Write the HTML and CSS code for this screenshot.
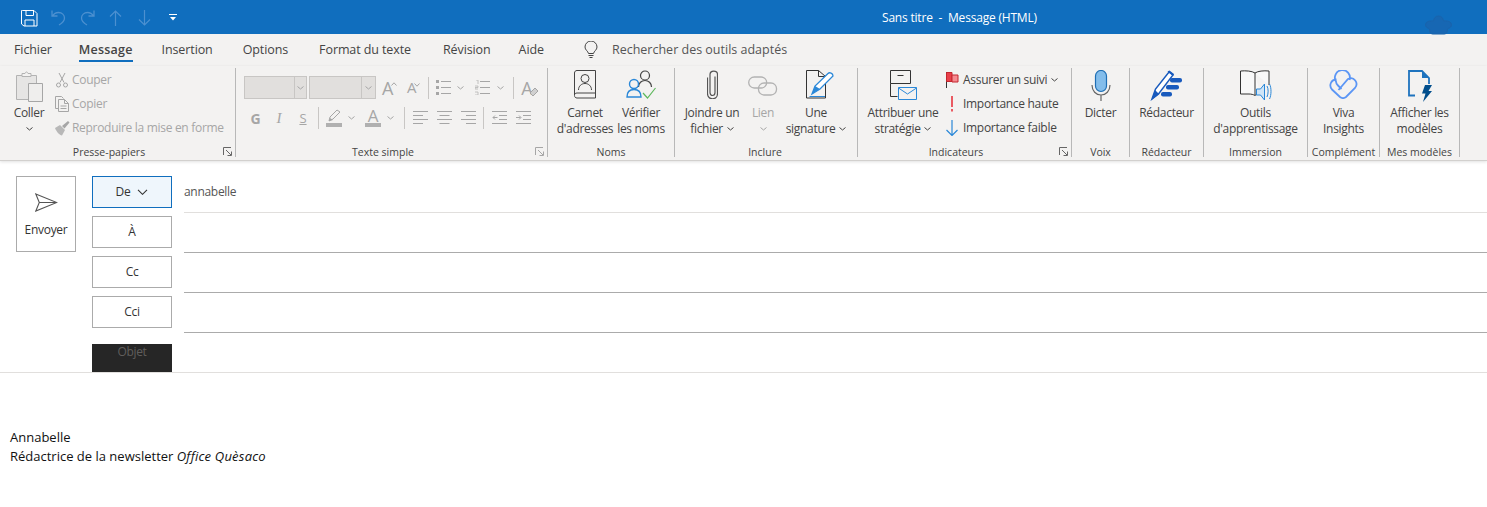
FILE: index.html
```html
<!DOCTYPE html>
<html lang="fr">
<head>
<meta charset="utf-8">
<title>Sans titre - Message (HTML)</title>
<link rel="stylesheet" href="styles.css">
</head>
<body>
<header class="titlebar">
  <div class="qat">
    <svg class="q-save" width="17" height="17" viewBox="0 0 17 17"><path d="M1.500.5h11.500l3 3v12.500H3L.5 14V.5z M5 .5v5h7.500v-5 M4 16v-6h9v6" fill="none" stroke="#fff"/></svg>
    <svg class="q-undo" width="15" height="16" viewBox="0 0 15 16"><path d="M1 .5v5.500h5.500M1.500 6C3 3.500 5 2.500 7.500 2.500c3.500 0 6 2.500 6 5.500 0 3-2 5-5.500 7" fill="none" stroke="#4c90d0" stroke-width="1.300"/></svg>
    <svg class="q-redo" width="15" height="16" viewBox="0 0 15 16"><path d="M14 .5v5.500H8.500M13.500 6C12 3.500 10 2.500 7.500 2.500c-3.500 0-6 2.500-6 5.500 0 3 2 5 5.500 7" fill="none" stroke="#4c90d0" stroke-width="1.300"/></svg>
    <svg class="q-up" width="13" height="16" viewBox="0 0 13 16"><path d="M6.500 16V1M1 6.500l5.500-5.500L12 6.500" fill="none" stroke="#4c90d0" stroke-width="1.200"/></svg>
    <svg class="q-down" width="13" height="16" viewBox="0 0 13 16"><path d="M6.500 0v15M1 9.500l5.500 5.500L12 9.500" fill="none" stroke="#4c90d0" stroke-width="1.200"/></svg>
    <svg class="q-more" width="8" height="7" viewBox="0 0 8 7"><path d="M0 .5h8" stroke="#fff"/><path d="M1 3h6L4 6.500z" fill="#fff"/></svg>
  </div>
  <div class="doc-title">Sans titre &nbsp;-&nbsp; Message (HTML)</div>
  <svg class="title-deco" width="27" height="20" viewBox="0 0 27 20"><path d="M13.500 1c3 0 4.500 2 5 5 4-.5 8 .5 8 4 0 2.500-2.500 3-4 4 0 3-1 5-3 5h-12c-2 0-3-2-3-5-1.500-1-4-1.500-4-4 0-3.500 4-4.500 8-4 .5-3 2-5 5-5z" fill="#1767b3" stroke="#1a64ac"/></svg>
</header>

<nav class="tabs">
  <span class="tab tab-first">Fichier</span>
  <span class="tab tab-active">Message</span>
  <span class="tab">Insertion</span>
  <span class="tab">Options</span>
  <span class="tab">Format du texte</span>
  <span class="tab">Révision</span>
  <span class="tab">Aide</span>
  <svg class="bulb" width="14" height="18" viewBox="0 0 14 18"><path d="M4.500 12.500C4 10 1 9 1 6a6 6 0 0 1 12 0c0 3-3 4-3.500 6.500z M4.500 14.500h5M5.500 16.500h3" fill="none" stroke="#444"/></svg>
  <span class="search">Rechercher des outils adaptés</span>
</nav>

<section class="ribbon">
  <div class="group g-clip">
    <div class="group-body">
      <div class="big coller">
        <svg class="big-icon" width="28" height="32" viewBox="0 0 28 32"><path d="M1.500 5.500h20v24h-20z" fill="#e6e5e4" stroke="#b3b3b3"/><path d="M7 5.500V3.500h3C10.500 1.500 12.500 1.500 13 3.500h3v3H7z" fill="#f3f2f1" stroke="#b3b3b3"/><path d="M13.500 13.500h14v18h-14z" fill="#efeeed" stroke="#a6a6a6"/></svg>
        <span class="big-label">Coller</span>
        <svg class="chev" width="7" height="4" viewBox="0 0 7 4"><path d="M.5.500l3 2.500 3-2.500" fill="none" stroke="#444"/></svg>
      </div>
      <div class="smalls">
        <div class="small off">
          <svg width="16" height="16" viewBox="0 0 16 16"><path d="M5 1l5 9.500M11 1L6 10.500" fill="none" stroke="#a6a6a6"/><circle cx="4.500" cy="13" r="2" fill="none" stroke="#a6a6a6"/><circle cx="11.500" cy="13" r="2" fill="none" stroke="#a6a6a6"/></svg>
          <span>Couper</span>
        </div>
        <div class="small off">
          <svg width="16" height="16" viewBox="0 0 16 16"><path d="M5.500 12.500h-4V.5h6l2 2" fill="none" stroke="#a6a6a6"/><path d="M4.500 3.500h6l4 4v8h-10z M10.500 3.500v4h4 M6.500 10h6M6.500 12.500h6" fill="#f3f2f1" stroke="#a6a6a6"/></svg>
          <span>Copier</span>
        </div>
        <div class="small off">
          <svg width="16" height="16" viewBox="0 0 16 16"><path d="M1 8l5-3 5 5-3 5.500C5 15 2 11 1 8z" fill="#b8b8b8"/><path d="M8 6l6-5 1.500 1.500-5 6" fill="#a6a6a6"/></svg>
          <span>Reproduire la mise en forme</span>
        </div>
      </div>
    </div>
    <div class="group-label label-clip">Presse-papiers</div>
    <svg class="launcher" width="9" height="9" viewBox="0 0 9 9"><path d="M.5 8V.5H8M3 3l5 5M4.500 8.500h4v-4" fill="none" stroke="#666"/></svg>
  </div>

  <div class="group g-text">
    <div class="group-body fmt">
      <div class="fmt-row row-top">
        <div class="combo c1"><span></span><svg width="7" height="4" viewBox="0 0 7 4"><path d="M.5.500l3 2.500 3-2.500" fill="none" stroke="#a6a6a6"/></svg></div>
        <div class="combo c2"><span></span><svg width="7" height="4" viewBox="0 0 7 4"><path d="M.5.500l3 2.500 3-2.500" fill="none" stroke="#a6a6a6"/></svg></div>
        <span class="glyph-a a-big m6">A<svg width="6" height="4" viewBox="0 0 6 4"><path d="M.5 3.500L3 .8l2.500 2.700" fill="none" stroke="#a6a6a6"/></svg></span>
        <span class="glyph-a a-small m10">A<svg width="6" height="4" viewBox="0 0 6 4"><path d="M.5.500L3 3.200 5.500.5" fill="none" stroke="#a6a6a6"/></svg></span>
        <i class="sep m8"></i>
        <svg class="m7" width="16" height="15" viewBox="0 0 16 15"><path d="M0 0h3v3H0zM0 6h3v3H0zM0 12h3v3H0z" fill="#a6a6a6"/><path d="M5 1.500h10M5 7.500h10M5 13.500h10" stroke="#a6a6a6"/></svg>
        <svg class="m5 mini" width="7" height="4" viewBox="0 0 7 4"><path d="M.5.500l3 2.500 3-2.500" fill="none" stroke="#a6a6a6"/></svg>
        <svg class="m11" width="16" height="15" viewBox="0 0 16 15"><path d="M1 0h2v4M0 6h3v1.500H0V9h3M0 12h3v3H0" fill="none" stroke="#b5b5b5" stroke-width=".8"/><path d="M5 1.500h10M5 7.500h10M5 13.500h10" stroke="#a6a6a6"/></svg>
        <svg class="m6 mini" width="7" height="4" viewBox="0 0 7 4"><path d="M.5.500l3 2.500 3-2.500" fill="none" stroke="#a6a6a6"/></svg>
        <i class="sep m9"></i>
        <span class="clear m7">A<svg width="10" height="10" viewBox="0 0 10 10"><path d="M1 6l5-5 3 3-5 5z" fill="#d0d0d0" stroke="#a6a6a6"/></svg></span>
      </div>
      <div class="fmt-row row-bottom">
        <span class="tool bold">G</span>
        <span class="tool ital">I</span>
        <span class="tool under">S</span>
        <i class="sep m3"></i>
        <svg class="m7" width="16" height="18" viewBox="0 0 16 18"><path d="M3 12l1-4 7-7 3 2-7 7z" fill="none" stroke="#a6a6a6"/><path d="M3 12l1-3 3 2z" fill="#a6a6a6"/><path d="M0 14h16v4H0z" fill="#b0b0b0"/></svg>
        <svg class="m6 mini" width="7" height="4" viewBox="0 0 7 4"><path d="M.5.500l3 2.500 3-2.500" fill="none" stroke="#a6a6a6"/></svg>
        <span class="color-a m10">A</span>
        <svg class="m6 mini" width="7" height="4" viewBox="0 0 7 4"><path d="M.5.500l3 2.500 3-2.500" fill="none" stroke="#a6a6a6"/></svg>
        <i class="sep m10"></i>
        <svg class="m8" width="15" height="14" viewBox="0 0 15 14"><path d="M0 .5h15M0 4.500h10M0 8.500h15M0 12.500h10" stroke="#a6a6a6"/></svg>
        <svg class="m9" width="15" height="14" viewBox="0 0 15 14"><path d="M0 .5h15M2.500 4.500h10M0 8.500h15M2.500 12.500h10" stroke="#a6a6a6"/></svg>
        <svg class="m9" width="15" height="14" viewBox="0 0 15 14"><path d="M0 .5h15M5 4.500h10M0 8.500h15M5 12.500h10" stroke="#a6a6a6"/></svg>
        <i class="sep m7"></i>
        <svg class="m8" width="15" height="14" viewBox="0 0 15 14"><path d="M0 .5h15M7 4.500h8M7 8.500h8M0 12.500h15" stroke="#a6a6a6"/><path d="M5.500 6.500H1M3 4.500l-2 2 2 2" fill="none" stroke="#a6a6a6"/></svg>
        <svg class="m9" width="15" height="14" viewBox="0 0 15 14"><path d="M0 .5h15M7 4.500h8M7 8.500h8M0 12.500h15" stroke="#a6a6a6"/><path d="M0 6.500h4.500M3 4.500l2 2-2 2" fill="none" stroke="#a6a6a6"/></svg>
      </div>
    </div>
    <div class="group-label label-text">Texte simple</div>
    <svg class="launcher" width="9" height="9" viewBox="0 0 9 9"><path d="M.5 8V.5H8M3 3l5 5M4.500 8.500h4v-4" fill="none" stroke="#a6a6a6"/></svg>
  </div>

  <div class="group g-names">
    <div class="group-body bigs">
      <div class="big w58">
        <svg class="big-icon" width="22" height="29" viewBox="0 0 22 29"><path d="M3 .5h18.500v27.500H3C1.500 28 .5 27 .5 25.500V3C.5 1.500 1.500.5 3 .5z M.5 25c0-1.200 1-2 2.500-2h18.500" fill="none" stroke="#444"/><circle cx="11" cy="8.500" r="4" fill="none" stroke="#444"/><path d="M4.500 20c0-4 3-6.500 6.500-6.500s6.500 2.500 6.500 6.500" fill="none" stroke="#444"/></svg>
        <span class="big-label">Carnet<br>d'adresses</span>
      </div>
      <div class="big w54">
        <svg class="big-icon" width="30" height="30" viewBox="0 0 30 30"><circle cx="19" cy="5.500" r="4.500" fill="none" stroke="#444" stroke-width="1.200"/><path d="M12.500 17c0-4 3-6.500 6.500-6.500s6.500 2.500 6.500 6.500" fill="none" stroke="#444" stroke-width="1.200"/><circle cx="8" cy="14" r="4.500" fill="none" stroke="#2b88d8" stroke-width="1.400"/><path d="M1 27c0-5 3-7.500 7-7.500s7 2.500 7 7.500z" fill="none" stroke="#2b88d8" stroke-width="1.400"/><path d="M17 23l4.500 5L29.500 18" fill="none" stroke="#5db85c" stroke-width="1.200"/></svg>
        <span class="big-label">Vérifier<br>les noms</span>
      </div>
    </div>
    <div class="group-label">Noms</div>
  </div>

  <div class="group g-include">
    <div class="group-body bigs">
      <div class="big w58">
        <svg class="big-icon" width="11" height="29" viewBox="0 0 11 29"><path d="M8 6v16c0 4-5 4-5 0V4c0-4.500 7.500-4.500 7.500 0v19c0 7-10 7-10 0V7" transform="translate(0 .5)" fill="none" stroke="#555" stroke-width="1.200"/></svg>
        <span class="big-label">Joindre un<br>fichier <svg class="ichev" width="7" height="4" viewBox="0 0 7 4"><path d="M.5.500l3 2.500 3-2.500" fill="none" stroke="#444"/></svg></span>
      </div>
      <div class="big w44 off">
        <svg class="big-icon link" width="30" height="20" viewBox="0 0 30 20"><rect x=".7" y="1" width="18" height="11" rx="5.500" fill="none" stroke="#b3b3b3" stroke-width="1.300"/><rect x="10.500" y="7" width="18" height="12" rx="5.500" fill="none" stroke="#b3b3b3" stroke-width="1.300"/></svg>
        <span class="big-label">Lien<br><svg class="ichev" width="7" height="4" viewBox="0 0 7 4"><path d="M.5.500l3 2.500 3-2.500" fill="none" stroke="#a6a6a6"/></svg></span>
      </div>
      <div class="big w60 sig">
        <svg class="big-icon" width="28" height="29" viewBox="0 0 28 29"><path d="M.5.500h12l7 6v21.500H.5z M12.500.5v6h7" fill="none" stroke="#333"/><path d="M6 24l3-8L22 3.500c1.500-1.500 5-.5 5 2.500L14 19z" fill="#fff" stroke="#2b88d8" stroke-width="1.300"/><path d="M6 24l3-8 5 3z" fill="#2b88d8"/><path d="M3.500 26.500H19" stroke="#2b88d8"/></svg>
        <span class="big-label">Une<br>signature <svg class="ichev" width="7" height="4" viewBox="0 0 7 4"><path d="M.5.500l3 2.500 3-2.500" fill="none" stroke="#444"/></svg></span>
      </div>
    </div>
    <div class="group-label label-include">Inclure</div>
  </div>

  <div class="group g-flags">
    <div class="group-body">
      <div class="big w78">
        <svg class="big-icon" width="28" height="30" viewBox="0 0 28 30"><path d="M1.500.5h20v13h-20zM1.500 13.500v13h7M8.500 5.500h6" fill="none" stroke="#333"/><path d="M9.500 17.500h18v12h-18z" fill="#f3f2f1" stroke="#2b88d8"/><path d="M9.500 18l9 6 9-6" fill="none" stroke="#2b88d8"/></svg>
        <span class="big-label">Attribuer une<br>stratégie <svg class="ichev" width="7" height="4" viewBox="0 0 7 4"><path d="M.5.500l3 2.500 3-2.500" fill="none" stroke="#444"/></svg></span>
      </div>
      <div class="smalls flags">
        <div class="small">
          <svg width="16" height="16" viewBox="0 0 16 16"><path d="M2.500 0v16" stroke="#333"/><path d="M2.500.5h5.500v9H2.500z" fill="#e8404a" stroke="#c4262e"/><path d="M8 3h6v7H8z" fill="#f58a90" stroke="#c4262e"/></svg>
          <span>Assurer un suivi <svg class="ichev" width="7" height="4" viewBox="0 0 7 4"><path d="M.5.500l3 2.500 3-2.500" fill="none" stroke="#444"/></svg></span>
        </div>
        <div class="small">
          <svg width="16" height="16" viewBox="0 0 16 16"><path d="M8 0v11" stroke="#ea5a62" stroke-width="2"/><path d="M7 13h2v2.500H7z" fill="#ea5a62"/></svg>
          <span>Importance haute</span>
        </div>
        <div class="small">
          <svg width="16" height="16" viewBox="0 0 16 16"><path d="M8 0v15.500M2.500 10l5.500 5.500 5.500-5.500" fill="none" stroke="#2b88d8" stroke-width="1.200"/></svg>
          <span>Importance faible</span>
        </div>
      </div>
    </div>
    <div class="group-label label-flags">Indicateurs</div>
    <svg class="launcher" width="9" height="9" viewBox="0 0 9 9"><path d="M.5 8V.5H8M3 3l5 5M4.500 8.500h4v-4" fill="none" stroke="#666"/></svg>
  </div>

  <div class="group g-voice">
    <div class="group-body bigs">
      <div class="big">
        <svg class="big-icon" width="20" height="32" viewBox="0 0 20 32"><rect x="4.500" y=".5" width="11" height="21" rx="5.500" fill="#83bdeb" stroke="#1f6fb5" stroke-width="1.200"/><path d="M1 15c0 6 4 10 9 10s9-4 9-10M10 25v6" fill="none" stroke="#666" stroke-width="1.200"/></svg>
        <span class="big-label">Dicter</span>
      </div>
    </div>
    <div class="group-label">Voix</div>
  </div>

  <div class="group g-editor">
    <div class="group-body bigs">
      <div class="big">
        <svg class="big-icon" width="33" height="31" viewBox="0 0 33 31"><path d="M2 29l3.500-10L19 2l4 3L8.500 24z" fill="#fff" stroke="#185abd" stroke-width="1.500"/><path d="M1.500 30l3.500-10 4 4z" fill="#185abd"/><path d="M17.500 1.500l2-1 4.500 3.500-1 2z" fill="#185abd"/><rect x="20" y="8" width="12" height="4.500" rx="2" fill="#185abd"/><rect x="16" y="15" width="13" height="4.500" rx="2" fill="#185abd"/><rect x="11" y="22" width="11" height="4.500" rx="2" fill="#185abd"/></svg>
        <span class="big-label">Rédacteur</span>
      </div>
    </div>
    <div class="group-label">Rédacteur</div>
  </div>

  <div class="group g-immersion">
    <div class="group-body bigs">
      <div class="big">
        <svg class="big-icon" width="32" height="30" viewBox="0 0 32 30"><path d="M15 3C12 1 6 .5 .5 1v23H9c2 0 4.500 .5 6 1.500C16 24.500 18 24 20 24M15 3c3-2 8.500-2.500 14-2v14M15 3v22" fill="#f8f8f8" stroke="#333"/><path d="M16.500 19h4l4-5v16l-4-5h-4z" fill="#cfe5f7" stroke="#2b88d8"/><path d="M27 16c1.500 2.500 1.500 7.500 0 11M29.500 14c2 3.500 2 11 0 15" fill="none" stroke="#2b88d8"/></svg>
        <span class="big-label">Outils<br>d'apprentissage</span>
      </div>
    </div>
    <div class="group-label">Immersion</div>
  </div>

  <div class="group g-addin">
    <div class="group-body bigs">
      <div class="big">
        <svg class="big-icon" width="29" height="29" viewBox="0 0 29 29"><path d="M7.500 9.500C2 9.500-.5 15.500 3 19.500l8 7.500c2 1.500 4 1.500 6 0l9-9c4-5-1-12-7-9L9.500 20" fill="none" stroke="#5b96f5" stroke-width="1.800"/><path d="M20.500 10A7.500 7.500 0 1 0 7 11.500c0 2 1 3 2 4l3.500 3.500" fill="none" stroke="#5b96f5" stroke-width="1.800"/></svg>
        <span class="big-label">Viva<br>Insights</span>
      </div>
    </div>
    <div class="group-label">Complément</div>
  </div>

  <div class="group g-templates">
    <div class="group-body bigs">
      <div class="big">
        <svg class="big-icon" width="24" height="32" viewBox="0 0 24 32"><path d="M7 25.500H1V1h13l7 7v6" fill="none" stroke="#1e73be" stroke-width="1.800"/><path d="M14 1l7 7h-7z" fill="#1e73be"/><path d="M17 15h7l-3.500 6H24L15 32l2.500-8.500H14z" fill="#004e8c"/></svg>
        <span class="big-label">Afficher les<br>modèles</span>
      </div>
    </div>
    <div class="group-label">Mes modèles</div>
  </div>
</section>

<main class="compose">
  <div class="compose-head">
    <div class="send">
      <svg width="23" height="19" viewBox="0 0 23 19"><path d="M.8 1l21 8.500-21 8.500 3.500-8.500zM4.300 9.500h17.500" fill="none" stroke="#555" stroke-width="1.100"/></svg>
      <span>Envoyer</span>
    </div>
    <div class="fields">
      <div class="field first">
        <div class="addr addr-active">De <svg width="11" height="6" viewBox="0 0 11 6"><path d="M1 .8l4.500 4.500L10 .8" fill="none" stroke="#333" stroke-width="1.100"/></svg></div>
        <div class="value">annabelle</div>
      </div>
      <div class="field"><div class="addr">À</div><div class="value"></div></div>
      <div class="field"><div class="addr">Cc</div><div class="value"></div></div>
      <div class="field"><div class="addr">Cci</div><div class="value"></div></div>
      <div class="field subject"><div class="addr-dark">Objet</div></div>
    </div>
  </div>
  <div class="message">
    <p>Annabelle</p>
    <p>Rédactrice de la newsletter <em>Office Quèsaco</em></p>
  </div>
</main>
</body>
</html>
```
FILE: styles.css
```css
* { box-sizing: border-box; }
html, body { margin: 0; height: 100%; }
body {
  font-family: "Open Sans", "Noto Sans", sans-serif;
  font-size: 12px;
  color: #444;
  background: #fff;
  overflow: hidden;
  letter-spacing: -0.3px;
}
svg { display: block; flex: none; }

/* title bar */
.titlebar {
  position: relative;
  height: 34px;
  background: #106ebe;
  display: flex;
  align-items: center;
  color: #fff;
}
.qat { display: flex; align-items: flex-start; padding-left: 21px; height: 34px; padding-top: 10px; }
.q-undo { margin-left: 13px; }
.q-redo { margin-left: 14px; }
.q-up { margin-left: 14px; }
.q-down { margin-left: 16px; }
.q-more { margin-left: 18px; margin-top: 4px; }
.doc-title { margin-left: 705px; white-space: nowrap; letter-spacing: -0.2px; }
.title-deco { position: absolute; left: 1425px; top: 15px; }

/* tabs */
.tabs {
  height: 32px;
  background: #f3f2f1;
  display: flex;
  align-items: flex-start;
  padding-left: 14px;
  font-size: 12.5px;
  letter-spacing: -0.1px;
}
.tab { height: 28px; line-height: 32px; margin-right: 29px; white-space: nowrap; color: #444; }
.tab:nth-child(1) { margin-right: 27px; }
.tab:nth-child(3) { margin-right: 30px; }
.tab:nth-child(4) { margin-right: 31px; }
.tab:nth-child(5) { margin-right: 32px; }
.tab:nth-child(6) { margin-right: 28px; }
.tab-active { font-weight: 600; letter-spacing: 0.2px; border-bottom: 2px solid #106ebe; }
.bulb { margin: 7px 0 0 11px; }
.search { margin-left: 14px; line-height: 32px; color: #555; letter-spacing: 0; }

/* ribbon */
.ribbon {
  height: 95px;
  background: #f3f2f1;
  display: flex;
  align-items: flex-start;
  padding-top: 2px;
  border-bottom: 1px solid #d2d0ce;
  box-shadow: 0 1px 3px rgba(0,0,0,.12);
  position: relative;
}
.group {
  position: relative;
  height: 89px;
  display: flex;
  flex-direction: column;
  border-right: 1px solid #b8b8b8;
  flex: none;
}
.g-clip { width: 236px; }
.g-text { width: 312px; }
.g-names { width: 127px; }
.g-include { width: 183px; }
.g-flags { width: 214px; }
.g-voice { width: 58px; }
.g-editor { width: 74px; }
.g-immersion { width: 104px; }
.g-addin { width: 72px; }
.g-templates { width: 80px; }

.group-body { flex: 1; display: flex; min-height: 0; }
.bigs { justify-content: center; }
.group-label {
  height: 12px;
  line-height: 12px;
  margin-bottom: -1px;
  margin-top: auto;
  font-size: 10.5px;
  text-align: center;
  letter-spacing: 0;
  white-space: nowrap;
}
.label-clip { width: 218px; }
.label-text { width: 294px; }
.label-include { width: 180px; }
.label-flags { width: 196px; }
.launcher { position: absolute; right: 3px; bottom: 1px; }

.big { position: relative; height: 70px; min-width: 40px; display: flex; flex-direction: column; align-items: center; text-align: center; flex: none; }
.big-icon { margin-top: 2px; margin-bottom: 3px; }
.big-icon.link { margin-top: 8px; }
.big-label { position: absolute; top: 37px; line-height: 16px; white-space: nowrap; }
.ichev { display: inline-block; vertical-align: 2px; margin-left: 1px; }
.chev { position: absolute; top: 59px; }
.off { color: #a6a6a6; }

.w44 { width: 44px; }
.w54 { width: 54px; }
.w58 { width: 58px; }
.w60 { width: 60px; }
.w78 { width: 78px; }
.sig { margin-left: 1px; }
.sig .big-icon { margin-left: 8px; }
.g-names .bigs { justify-content: flex-start; padding-left: 8px; }
.g-include .bigs { justify-content: flex-start; padding-left: 8px; }

/* clipboard group */
.coller { width: 58px; }
.smalls { display: flex; flex-direction: column; }
.small { display: flex; align-items: center; height: 24px; gap: 1px; white-space: nowrap; }
.small span { margin-top: -2px; }
.g-clip .smalls { margin-left: -4px; }
.g-clip .small { color: #a6a6a6; }
.g-clip .small svg { margin-right: 1px; }
.g-flags .group-body { padding-left: 6px; }
.flags { margin-left: 2px; }
.flags .small svg { margin-right: 2px; }

/* basic text group */
.fmt { flex-direction: column; padding: 8px 0 0 8px; }
.fmt-row { display: flex; align-items: center; }
.row-top { height: 23px; }
.row-bottom { height: 24px; margin-top: 7px; }
.combo { height: 23px; display: flex; align-items: center; border: 1px solid #c8c6c4; background: #e1dfdd; }
.combo span { flex: 1; height: 100%; border-right: 1px solid #c8c6c4; }
.combo svg { margin: 0 2px; }
.c1 { width: 63px; margin-right: 2px; }
.c2 { width: 67px; }
.combo.c2 svg { margin: 0 3px; }
.glyph-a { display: flex; align-items: flex-start; color: #a6a6a6; line-height: 1; }
.a-big { font-size: 18px; }
.a-small { font-size: 15px; }
.glyph-a svg { margin-top: 3px; margin-left: -2px; }
.sep { display: block; width: 1px; height: 22px; background: #c8c6c4; flex: none; }
.clear { display: flex; align-items: flex-end; font-size: 18px; color: #a6a6a6; line-height: 1; }
.clear svg { margin-left: -3px; }
.tool { width: 24px; text-align: center; font-size: 14px; color: #a6a6a6; letter-spacing: 0; }
.tool.bold { font-weight: 700; width: 23px; }
.tool.ital { font-style: italic; font-family: "Liberation Serif", serif; font-size: 15px; }
.tool.under { text-decoration: underline; font-size: 13px; }
.color-a { width: 16px; height: 18px; line-height: 13px; font-size: 17px; text-align: center; color: #a6a6a6; border-bottom: 4px solid #b0b0b0; }
.mini { align-self: center; }
.m3 { margin-left: 3px; }
.m5 { margin-left: 5px; }
.m6 { margin-left: 6px; }
.m7 { margin-left: 7px; }
.m8 { margin-left: 8px; }
.m9 { margin-left: 9px; }
.m10 { margin-left: 10px; }
.m11 { margin-left: 11px; }

/* compose */
.compose-head { display: flex; padding-top: 12px; border-bottom: 1px solid #e1dfdd; }
.send {
  width: 60px;
  height: 76px;
  margin: 3px 16px 0 16px;
  border: 1px solid #ababab;
  display: flex;
  flex-direction: column;
  align-items: center;
  color: #333;
  flex: none;
}
.send svg { margin-top: 16px; }
.send span { margin-top: 10px; line-height: 16px; }
.fields { flex: 1; min-width: 0; }
.field { display: flex; height: 40px; }
.addr {
  width: 80px;
  height: 32px;
  margin-top: 3px;
  padding-bottom: 1px;
  border: 1px solid #ababab;
  display: flex;
  align-items: center;
  justify-content: center;
  gap: 7px;
  color: #333;
  flex: none;
  background: #fff;
}
.addr-active { background: #eff6fc; border-color: #106ebe; }
.value {
  flex: 1;
  margin-left: 12px;
  border-bottom: 1px solid #ababab;
  color: #555;
  line-height: 37px;
}
.first .value { border-bottom-color: #e1dfdd; }
.subject { height: 39px; }
.addr-dark {
  width: 80px;
  height: 28px;
  margin-top: 11px;
  background: #262626;
  color: #605e5c;
  text-align: center;
  line-height: 15px;
}
.message { padding: 55px 10px 0; font-size: 13px; line-height: 19px; color: #111; letter-spacing: 0; }
.message em { letter-spacing: 0.22px; }
.message p { margin: 0; }
```
